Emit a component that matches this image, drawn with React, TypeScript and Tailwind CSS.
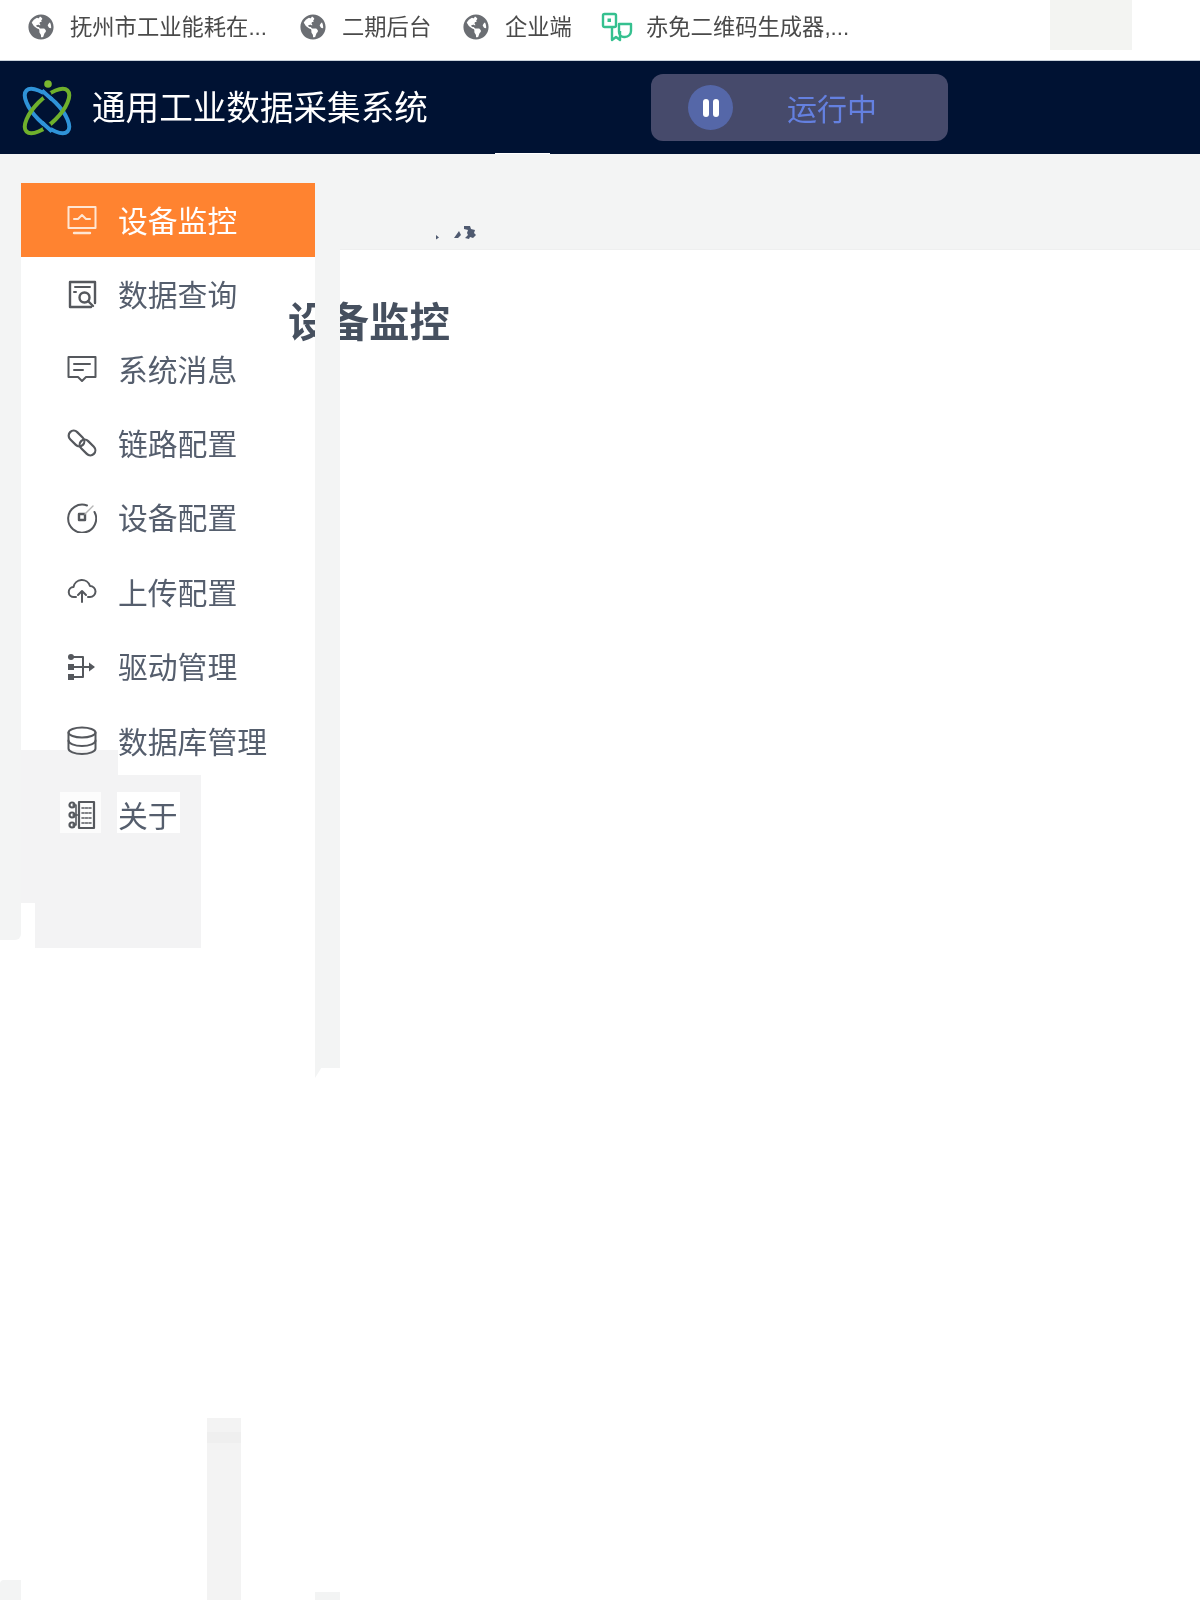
import type { ReactNode } from "react";
import { FaGlobeAmericas } from "react-icons/fa";

const cjk = "font-['Liberation_Sans','Noto_Sans_CJK_SC',sans-serif]";

const bookmarks = [
  { label: "抚州市工业能耗在...", width: "w-[272px]" },
  { label: "二期后台", width: "w-[163px]" },
  { label: "企业端", width: "w-[138px]" },
];

function Ico({ children }: { children: ReactNode }) {
  return (
    <svg width="30" height="30" viewBox="0 0 30 30" fill="none" stroke="currentColor" strokeWidth="2" strokeLinecap="round" strokeLinejoin="round" className="shrink-0">
      {children}
    </svg>
  );
}

const menu: { label: string; icon: ReactNode }[] = [
  {
    label: "设备监控",
    icon: (
      <Ico>
        <rect x="1.500" y="2" width="27" height="21" />
        <path d="M7 14h4l4-4 4 4h4" />
        <path d="M7 28h16" strokeWidth="2.400" />
      </Ico>
    ),
  },
  {
    label: "数据查询",
    icon: (
      <Ico>
        <path d="M24 27H3V2h25v21" strokeWidth="2.400" />
        <path d="M8 7h15M7 12h2" />
        <circle cx="17.500" cy="17.500" r="5" strokeWidth="2.400" />
        <path d="m21 21 5 5" strokeWidth="2.400" />
      </Ico>
    ),
  },
  {
    label: "系统消息",
    icon: (
      <Ico>
        <path d="M1.500 3h27v20H19l-4 4-4-4H1.500Z" />
        <path d="M7 10h16M7 16h9" />
      </Ico>
    ),
  },
  {
    label: "链路配置",
    icon: (
      <Ico>
        <rect x="0.500" y="5.500" width="18" height="10" rx="5" transform="rotate(45 9.500 10.500)" strokeWidth="2.200" />
        <rect x="11.500" y="14.500" width="18" height="10" rx="5" transform="rotate(45 20.500 19.500)" strokeWidth="2.200" />
      </Ico>
    ),
  },
  {
    label: "设备配置",
    icon: (
      <Ico>
        <path d="M20 2.500A14 14 0 1 0 27.500 9" strokeWidth="2" />
        <rect x="12" y="11" width="6" height="6" strokeWidth="2.400" />
        <path d="m18 11 8-8" stroke="#b5b5b5" strokeWidth="1.400" />
      </Ico>
    ),
  },
  {
    label: "上传配置",
    icon: (
      <Ico>
        <path d="M9 20H7a5 5 0 0 1-.5-10A8.500 8.500 0 0 1 23 9a5.500 5.500 0 0 1 0 11h-2" />
        <path d="M15 25V14m-4 4 4-4 4 4" />
      </Ico>
    ),
  },
  {
    label: "驱动管理",
    icon: (
      <Ico>
        <path d="M5 5h11v20H5M5 15h21" strokeWidth="2" />
        <path d="m22 10.500 6 4.500-6 4.500Z" fill="currentColor" stroke="none" />
        <rect x="1" y="2" width="6" height="6" rx="3" fill="currentColor" stroke="none" />
        <rect x="1" y="12" width="6" height="6" fill="currentColor" stroke="none" />
        <rect x="1" y="22" width="6" height="6" fill="currentColor" stroke="none" />
      </Ico>
    ),
  },
  {
    label: "数据库管理",
    icon: (
      <Ico>
        <ellipse cx="15" cy="6.500" rx="13.500" ry="5" />
        <path d="M1.500 6.500v16c0 3 6 5.500 13.500 5.500s13.500-2.500 13.500-5.500v-16" />
        <path d="M1.500 14.500c0 3 6 5.500 13.500 5.500s13.500-2.500 13.500-5.500" />
      </Ico>
    ),
  },
  {
    label: "关于",
    icon: (
      <Ico>
        <rect x="12" y="2" width="15" height="26" strokeWidth="2.200" />
        <path d="M15 8h9M15 13h9M15 18h9M15 23h9" strokeWidth="1.600" strokeDasharray="2 1.500" />
        <path d="M6 15h6M6 5h3v20H6" strokeWidth="1.600" />
        <circle cx="5" cy="5" r="2.500" strokeWidth="2.200" />
        <circle cx="5" cy="15" r="2.500" strokeWidth="2.200" />
        <circle cx="5" cy="25" r="2.500" strokeWidth="2.200" />
      </Ico>
    ),
  },
];

function Logo() {
  return (
    <svg width="52" height="58" viewBox="0 0 52 58" fill="none" strokeWidth="4">
      <circle cx="27" cy="5" r="3.800" fill="#7ab72f" />
      <ellipse cx="26" cy="32" rx="29" ry="12" stroke="#2f93d8" transform="rotate(45 26 32)" />
      <ellipse cx="26" cy="32" rx="29" ry="12" stroke="#6fb02c" transform="rotate(-45 26 32)" />
      <circle cx="26" cy="16" r="4.500" fill="#001233" />
      <circle cx="26" cy="48" r="4.500" fill="#001233" />
      <path d="m21 11.500 10 9M21 43.500 31 52.500" stroke="#2f93d8" />
    </svg>
  );
}

function QrMark() {
  return (
    <svg width="32" height="32" viewBox="0 0 32 32" fill="none" stroke="#35c08f" strokeWidth="2.400" strokeLinejoin="round">
      <rect x="2" y="3" width="13" height="13" rx="1.500" />
      <rect x="6.500" y="7.500" width="3.500" height="3.500" fill="#35c08f" stroke="none" />
      <path d="M11 16v13l4-3 4 3v-9" />
      <path d="M18 13h12v7a6 6 0 0 1-6 6h-1a5 5 0 0 1-5-5Z" />
    </svg>
  );
}

export default function App() {
  return (
    <div className={`relative flex h-[1600px] w-[1200px] flex-col overflow-hidden bg-white blur-[0.4px] ${cjk}`}>
      {/* bookmark bar */}
      <div className="relative flex h-[61px] items-center border-b border-[#c9d2dc] pb-[6px] pl-[28px] text-[22.3px] text-[#4a4a4a]">
        {bookmarks.map((b) => (
          <div key={b.label} className={`flex items-center gap-[16px] ${b.width} shrink-0 whitespace-nowrap`}>
            <FaGlobeAmericas size={26} className="shrink-0 text-[#6b6e73]" />
            <span className="pt-[2px]">{b.label}</span>
          </div>
        ))}
        <div className="flex items-center gap-[13px] whitespace-nowrap">
          <QrMark />
          <span className="pt-[2px]">赤免二维码生成器,...</span>
        </div>
        <div className="absolute top-0 left-[1050px] h-[50px] w-[82px] bg-[#f3f4f2]" />
      </div>

      {/* header */}
      <header className="relative flex h-[93px] shrink-0 items-center bg-[#001233] pl-[21px]">
        <Logo />
        <h1 className="ml-[19px] w-[559px] pt-[4px] text-[33.6px] font-normal whitespace-nowrap text-white">通用工业数据采集系统</h1>
        <div className="flex h-[67px] w-[297px] items-center rounded-[12px] bg-[#464a6b] pl-[37px]">
          <span className="flex h-[45px] w-[45px] items-center justify-center gap-[4px] rounded-full bg-[#5567a8]">
            <i className="h-[18px] w-[6px] rounded-full bg-white" />
            <i className="h-[18px] w-[6px] rounded-full bg-white" />
          </span>
          <span className="ml-[54px] pt-[4px] text-[30px] text-[#6480e0]">运行中</span>
        </div>
        <div className="absolute bottom-0 left-[495px] h-px w-[55px] bg-white" />
      </header>

      {/* body */}
      <div className="relative flex flex-1 bg-white">
        <div className="flex w-[21px] shrink-0 flex-col justify-between">
          <div className="h-[786px] rounded-br-[6px] bg-[#f3f4f4]" />
          <div className="h-[20px] rounded-tl-[4px] bg-[#f3f4f4]" />
        </div>

        <aside className="relative w-[294px] shrink-0">
          <div className="h-[29px] bg-[#f3f4f4]" />
          <nav className="relative bg-white">
            {/* washed out patch behind the lower rows */}
            <div className="absolute top-[567px] left-0 h-[198px] w-[180px] bg-[#f3f3f4]" />
            <div className="absolute top-[720px] left-0 h-[45px] w-[14px] bg-white" />
            <div className="absolute top-[567px] left-[97px] h-[25px] w-[83px] bg-white" />
            <div className="absolute top-[609px] left-[39px] h-[41px] w-[41px] bg-white/70" />
            <div className="absolute top-[609px] left-[96px] h-[41px] w-[63px] bg-white" />
            {menu.map((m, i) => (
              <div
                key={m.label}
                className={`relative flex h-[74.4px] items-center gap-[21px] pl-[46px] text-[29.8px] ${i === 0 ? "bg-[#ff8330] text-white" : "text-[#555e6d]"}`}
              >
                <span className={i === 0 ? "text-[#ffe6d3]" : "text-[#55585d]"}>{m.icon}</span>
                <span className="pt-[4px] whitespace-nowrap">{m.label}</span>
              </div>
            ))}
          </nav>
        </aside>

        <main className="relative z-10 order-last min-w-0 flex-1">
          <div className="relative h-[96px] border-b border-[#eeefef] bg-[#f3f4f4]">
            <svg width="44" height="20" viewBox="0 0 44 20" className="absolute top-[70px] left-[94px]" fill="#4f5a70">
              <path d="m2 11 3 2.500-3 2Z" />
              <path d="M30 2h6l1 3 4 1-1 3 2 2-3 3-3-1-1 2-4-1 3-3-1-2 1-3-4-1ZM25 7l2 4-3 3h-4Z" />
            </svg>
          </div>
          <h2 className="mt-[49px] -ml-[52px] text-[40.5px] leading-[48px] font-bold whitespace-nowrap text-[#46505f]">设备监控</h2>
        </main>

        <div className="relative z-20 flex w-[25px] shrink-0 flex-col justify-between">
          <div className="h-[924px] bg-[#f3f4f4] [clip-path:polygon(0_0,100%_0,100%_calc(100%-10px),25%_calc(100%-10px),0_100%)]" />
          <div className="h-[8px] bg-[#f3f4f4]" />
        </div>

        {/* stray washed out strip near the bottom */}
        <div className="absolute top-[1264px] bottom-0 left-[207px] z-20 w-[34px] bg-[#f3f3f3]">
          <div className="mt-[14px] h-[11px] bg-[#efefef]" />
        </div>
      </div>
    </div>
  );
}
